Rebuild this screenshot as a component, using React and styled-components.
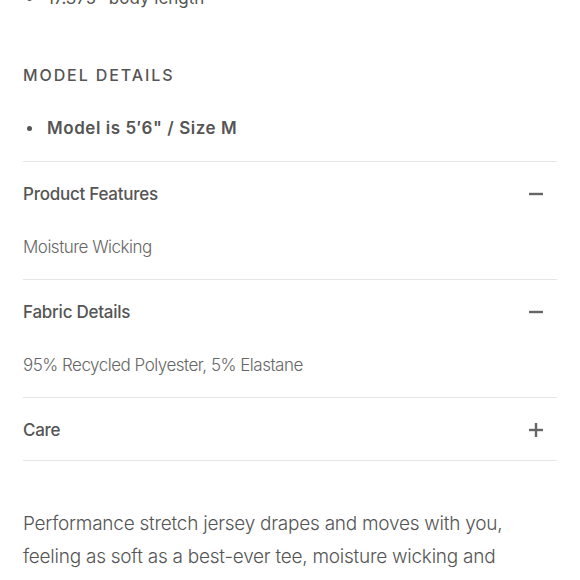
import React from "react";
import styled, { createGlobalStyle } from "styled-components";

const Global = createGlobalStyle`
  html, body { margin: 0; padding: 0; background: #fff; }
  body { font-family: Inter, "Noto Sans", sans-serif; color: #555; -webkit-font-smoothing: antialiased; }
`;

const Page = styled.div`
  padding: 0 23px;
  overflow: hidden;
  height: 580px;
`;

const List = styled.ul`
  list-style: none;
  margin: ${(p) => p.$mt || 0}px 0 0;
  padding: 0;
`;

const Item = styled.li`
  display: flex;
  align-items: center;
  font-size: 17px;
  line-height: 26px;
  font-weight: ${(p) => p.$weight || 400};
  color: #555;
  letter-spacing: ${(p) => (p.$weight ? "0.55px" : "0")};
`;

const Dot = styled.span`
  width: 5px;
  height: 5px;
  border-radius: 50%;
  background: #555;
  margin: 0 15px 0 4px;
  flex: none;
`;

const SectionTitle = styled.h3`
  margin: 53px 0 0;
  font-size: 16px;
  line-height: 22px;
  font-weight: 500;
  letter-spacing: 1.9px;
  color: #555;
`;

const Accordion = styled.div`
  margin-top: 20px;
  border-bottom: 1px solid #e6e6e6;
`;

const Section = styled.div`
  border-top: 1px solid #e6e6e6;
`;

const Header = styled.div`
  display: flex;
  align-items: center;
  justify-content: space-between;
  padding: 21px 0 19px;
  height: 22px;
  font-size: 17px;
  font-weight: 500;
  letter-spacing: -0.25px;
  color: #555;
`;

const Body = styled.div`
  margin-top: 10px;
  padding-bottom: 19px;
  font-size: 17px;
  line-height: 26px;
  font-weight: 300;
  letter-spacing: -0.5px;
  color: #666;
`;

const Icon = styled.svg`
  width: 16px;
  height: 16px;
  margin-right: 13px;
  flex: none;
`;

const Paragraph = styled.p`
  margin: 46px 0 0;
  max-width: 510px;
  font-size: 19px;
  line-height: 33px;
  font-weight: 300;
  letter-spacing: -0.25px;
  color: #555;
`;

function Toggle({ open }) {
  return (
    <Icon viewBox="0 0 16 16">
      <rect x="1" y="6.8" width="14" height="2.4" fill="#666" />
      {!open && <rect x="6.8" y="1" width="2.4" height="14" fill="#666" />}
    </Icon>
  );
}

const sections = [
  { title: "Product Features", body: "Moisture Wicking", open: true },
  { title: "Fabric Details", body: "95% Recycled Polyester, 5% Elastane", open: true },
  { title: "Care", body: "", open: false },
];

export default function App() {
  return (
    <>
      <Global />
      <Page>
        <List $mt={-15}>
          <Item>
            <Dot />
            17.375" body length
          </Item>
        </List>
        <SectionTitle>MODEL DETAILS</SectionTitle>
        <List $mt={29}>
          <Item $weight={600}>
            <Dot />
            Model is 5′6" / Size M
          </Item>
        </List>
        <Accordion>
          {sections.map((s) => (
            <Section key={s.title}>
              <Header>
                {s.title}
                <Toggle open={s.open} />
              </Header>
              {s.open && <Body>{s.body}</Body>}
            </Section>
          ))}
        </Accordion>
        <Paragraph>
          Performance stretch jersey drapes and moves with you, feeling as soft as a best-ever tee, moisture wicking and
          quick drying.
        </Paragraph>
      </Page>
    </>
  );
}
